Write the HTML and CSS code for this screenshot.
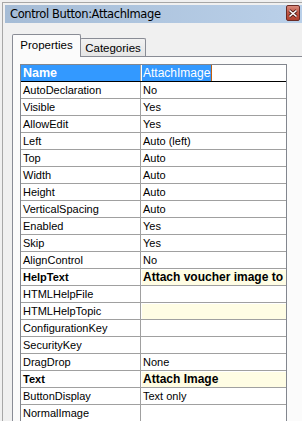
FILE: index.html
```html
<!DOCTYPE html>
<html>
<head>
<meta charset="utf-8">
<link rel="stylesheet" href="styles.css">
</head>
<body>
<div class="window">
  <div class="titlebar">
    <span class="title">Control Button:AttachImage</span>
    <span class="close"><svg width="10" height="9" viewBox="0 0 10 9"><path d="M1.5 1.5 L8.5 7.5 M8.5 1.5 L1.5 7.5" stroke="#4a1a14" stroke-width="3.2" fill="none"/><path d="M1.5 1.5 L8.5 7.5 M8.5 1.5 L1.5 7.5" stroke="#ffffff" stroke-width="1.6" fill="none"/></svg></span>
  </div>
  <div class="tabs">
    <div class="tab active">Properties</div>
    <div class="tab">Categories</div>
  </div>
  <div class="panel">
    <div class="grid">
      <div class="row head"><div class="label sel">Name</div><div class="value"><span class="hl">AttachImage</span><span class="caret"></span></div></div>
      <div class="row"><div class="label">AutoDeclaration</div><div class="value">No</div></div>
      <div class="row"><div class="label">Visible</div><div class="value">Yes</div></div>
      <div class="row"><div class="label">AllowEdit</div><div class="value">Yes</div></div>
      <div class="row"><div class="label">Left</div><div class="value">Auto (left)</div></div>
      <div class="row"><div class="label">Top</div><div class="value">Auto</div></div>
      <div class="row"><div class="label">Width</div><div class="value">Auto</div></div>
      <div class="row"><div class="label">Height</div><div class="value">Auto</div></div>
      <div class="row"><div class="label">VerticalSpacing</div><div class="value">Auto</div></div>
      <div class="row"><div class="label">Enabled</div><div class="value">Yes</div></div>
      <div class="row"><div class="label">Skip</div><div class="value">Yes</div></div>
      <div class="row"><div class="label">AlignControl</div><div class="value">No</div></div>
      <div class="row"><div class="label bold">HelpText</div><div class="value"><div class="yellow bold">Attach voucher image to</div></div></div>
      <div class="row"><div class="label">HTMLHelpFile</div><div class="value"></div></div>
      <div class="row"><div class="label">HTMLHelpTopic</div><div class="value"><div class="yellow"></div></div></div>
      <div class="row"><div class="label">ConfigurationKey</div><div class="value"></div></div>
      <div class="row"><div class="label">SecurityKey</div><div class="value"></div></div>
      <div class="row"><div class="label">DragDrop</div><div class="value">None</div></div>
      <div class="row"><div class="label bold">Text</div><div class="value"><div class="yellow bold">Attach Image</div></div></div>
      <div class="row"><div class="label">ButtonDisplay</div><div class="value">Text only</div></div>
      <div class="row last"><div class="label">NormalImage</div><div class="value"></div></div>
    </div>
  </div>
</div>
</body>
</html>
```
FILE: styles.css
```css
html, body {
  margin: 0;
  padding: 0;
  background: #f0f0f0;
  overflow: hidden;
  height: 421px;
}
.window {
  margin: 2px 0 0 2px;
  border-left: 1px solid #a7a7a7;
  border-top: 1px solid #a7a7a7;
  padding: 2px 0 0 2px;
  font-family: "Liberation Sans", Arial, sans-serif;
}
.titlebar {
  height: 18px;
  display: flex;
  align-items: center;
  justify-content: space-between;
  background: linear-gradient(to right, #a5bcd6, #bad0e9);
  padding-left: 5px;
}
.title {
  font-family: "DejaVu Sans", sans-serif;
  font-size: 11.5px;
  color: #000;
  letter-spacing: -0.4px;
}
.close {
  width: 12px;
  height: 14px;
  margin-right: 2px;
  margin-top: -2px;
  border: 1px solid #6a2b25;
  border-radius: 2px;
  background: linear-gradient(#d98a7c, #c05544 50%, #b0412f);
  display: flex;
  align-items: center;
  justify-content: center;
}
.tabs {
  display: flex;
  align-items: flex-end;
  margin: 11px 0 0 7px;
  height: 22px;
  position: relative;
  z-index: 1;
}
.tab {
  font-size: 11.5px;
  color: #000;
  border: 1px solid #898c95;
  border-bottom: none;
  height: 18px;
  line-height: 18px;
  background: linear-gradient(#f2f2f2, #e5e5e5);
  box-sizing: border-box;
  border-radius: 2px 2px 0 0;
  width: 66px;
  text-align: center;
}
.tab.active {
  background: #fbfbfb;
  height: 23px;
  line-height: 20px;
  width: 69px;
  margin-bottom: -1px;
  margin-right: -1px;
}
.panel {
  margin-left: 7px;
  width: 280px;
  border: 1px solid #898c95;
  border-bottom: none;
  background: #fbfbfb;
  padding: 7px 6px 0 7px;
}
.grid {
  width: 265px;
  border: 1px solid #82868e;
  border-bottom: none;
  background: #fff;
  font-size: 11px;
  color: #000;
}
.row {
  display: flex;
  height: 16px;
  border-bottom: 1px solid #a0a0a0;
}
.row.last {
  border-bottom: none;
}
.row.head {
  border-bottom-color: #000;
}
.label {
  width: 120px;
  border-right: 1px solid #a0a0a0;
  padding-left: 2px;
  box-sizing: border-box;
  line-height: 16px;
  white-space: nowrap;
}
.label.sel {
  background: #3399ff;
  color: #fff;
  font-weight: bold;
  font-size: 12.5px;
}
.bold {
  font-weight: bold;
}
.value {
  flex: 1;
  padding-left: 2px;
  line-height: 16px;
  white-space: nowrap;
  overflow: hidden;
  display: flex;
}
.hl {
  background: #3399ff;
  color: #fff;
  font-size: 12px;
  padding: 0 1px;
  margin-left: -1px;
}
.caret {
  width: 1px;
  background: #c06010;
}
.yellow {
  flex: 1;
  background: #fffde4;
  margin: 1px 0 0 -1px;
  padding-left: 1px;
  line-height: 15px;
  height: 15px;
}
.yellow.bold {
  font-size: 12px;
}
```
